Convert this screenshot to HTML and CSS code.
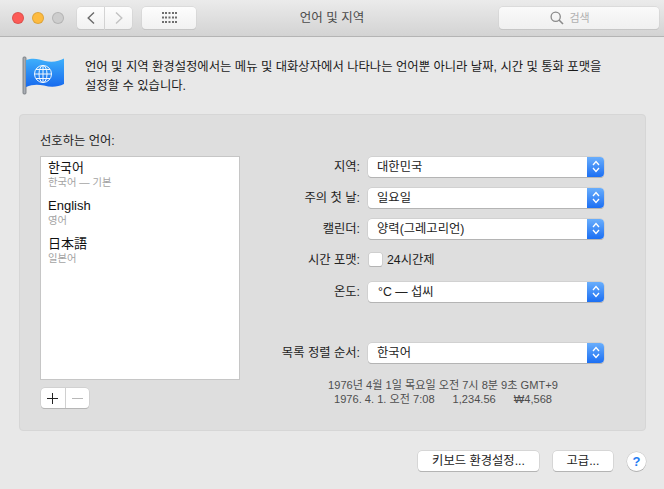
FILE: index.html
```html
<!DOCTYPE html>
<html lang="ko">
<head>
<meta charset="utf-8">
<title>언어 및 지역</title>
<link rel="stylesheet" href="styles.css">
</head>
<body>
<div class="window">
  <header class="titlebar">
    <div class="lights"><span class="light red"></span><span class="light yellow"></span><span class="light gray"></span></div>
    <div class="nav">
      <button class="tb tb-back"><svg width="8" height="12" viewBox="0 0 8 12"><path d="M7 .5 L1.200 6 L7 11.500" fill="none" stroke="#6a6a6a" stroke-width="1.400"/></svg></button>
      <button class="tb tb-fwd"><svg width="8" height="12" viewBox="0 0 8 12"><path d="M1 .5 L6.800 6 L1 11.500" fill="none" stroke="#c2c2c2" stroke-width="1.400"/></svg></button>
    </div>
    <button class="tb tb-grid"><svg width="15" height="11" viewBox="0 0 15 11" fill="#6e6e6e"><rect x="0" y="0" width="2" height="2"/><rect x="3" y="0" width="2" height="2"/><rect x="6.500" y="0" width="2" height="2"/><rect x="10" y="0" width="2" height="2"/><rect x="13" y="0" width="2" height="2"/><rect x="0" y="4.500" width="2" height="2"/><rect x="3" y="4.500" width="2" height="2"/><rect x="6.500" y="4.500" width="2" height="2"/><rect x="10" y="4.500" width="2" height="2"/><rect x="13" y="4.500" width="2" height="2"/><rect x="0" y="9" width="2" height="2"/><rect x="3" y="9" width="2" height="2"/><rect x="6.500" y="9" width="2" height="2"/><rect x="10" y="9" width="2" height="2"/><rect x="13" y="9" width="2" height="2"/></svg></button>
    <div class="title">언어 및 지역</div>
    <div class="search"><svg width="14" height="14" viewBox="0 0 14 14"><circle cx="5.700" cy="5.700" r="4.600" fill="none" stroke="#8a8a8a" stroke-width="1.300"/><path d="M9 9 L13 13" stroke="#8a8a8a" stroke-width="1.600"/></svg><span>검색</span></div>
  </header>

  <section class="intro">
    <svg class="flag" width="44" height="40" viewBox="0 0 44 40">
      <defs><linearGradient id="fl" x1="0" y1="0" x2="0" y2="1"><stop offset="0" stop-color="#3fb0fb"/><stop offset="1" stop-color="#1769ee"/></linearGradient></defs>
      <rect x="1" y="1" width="3" height="37" rx="1" fill="#a9adb3" stroke="#6f7378" stroke-width=".8"/>
      <path d="M4 4 C11 1.500 17 3 23 5 C30 6.500 37 5.500 42 2.500 L42 28 C36 31 29 31.500 22 29.500 C15 28 10 28.500 4 31 Z" fill="url(#fl)"/>
      <g fill="none" stroke="#fff" stroke-width="1" opacity=".95">
        <circle cx="21" cy="18" r="8.500"/><ellipse cx="21" cy="18" rx="4" ry="8.500"/><path d="M21 9.500 V26.500 M12.500 18 H29.500 M14 13.500 H28 M14 22.500 H28"/>
      </g>
    </svg>
    <p class="intro-text">언어 및 지역 환경설정에서는 메뉴 및 대화상자에서 나타나는 언어뿐 아니라 날짜, 시간 및 통화 포맷을<br>설정할 수 있습니다.</p>
  </section>

  <main class="panel">
    <div class="lang-col">
      <div class="lang-title">선호하는 언어:</div>
      <ul class="lang-list">
        <li><div class="lang-name">한국어</div><div class="lang-sub">한국어 — 기본</div></li>
        <li><div class="lang-name">English</div><div class="lang-sub">영어</div></li>
        <li><div class="lang-name">日本語</div><div class="lang-sub">일본어</div></li>
      </ul>
      <div class="addremove"><span class="ar plus"><svg width="13" height="13" viewBox="0 0 13 13"><path d="M6.500 1 V12 M1 6.500 H12" stroke="#222" stroke-width="1"/></svg></span><span class="ar minus"><svg width="13" height="13" viewBox="0 0 13 13"><path d="M1 6.500 H12" stroke="#b8b8b8" stroke-width="1"/></svg></span></div>
    </div>
    <div class="form-col">
      <div class="row r1"><label>지역:</label><div class="select"><span>대한민국</span><i class="stepper"><svg width="8" height="13" viewBox="0 0 8 13"><path d="M1 5 L4 1.500 L7 5 M1 8 L4 11.500 L7 8" fill="none" stroke="#fff" stroke-width="1.300"/></svg></i></div></div>
      <div class="row r2"><label>주의 첫 날:</label><div class="select"><span>일요일</span><i class="stepper"><svg width="8" height="13" viewBox="0 0 8 13"><path d="M1 5 L4 1.500 L7 5 M1 8 L4 11.500 L7 8" fill="none" stroke="#fff" stroke-width="1.300"/></svg></i></div></div>
      <div class="row r3"><label>캘린더:</label><div class="select"><span>양력(그레고리언)</span><i class="stepper"><svg width="8" height="13" viewBox="0 0 8 13"><path d="M1 5 L4 1.500 L7 5 M1 8 L4 11.500 L7 8" fill="none" stroke="#fff" stroke-width="1.300"/></svg></i></div></div>
      <div class="row r4"><label>시간 포맷:</label><div class="check"><i class="box"></i><span>24시간제</span></div></div>
      <div class="row r5"><label>온도:</label><div class="select"><span class="deg">°C — 섭씨</span><i class="stepper"><svg width="8" height="13" viewBox="0 0 8 13"><path d="M1 5 L4 1.500 L7 5 M1 8 L4 11.500 L7 8" fill="none" stroke="#fff" stroke-width="1.300"/></svg></i></div></div>
      <div class="row r6"><label>목록 정렬 순서:</label><div class="select"><span>한국어</span><i class="stepper"><svg width="8" height="13" viewBox="0 0 8 13"><path d="M1 5 L4 1.500 L7 5 M1 8 L4 11.500 L7 8" fill="none" stroke="#fff" stroke-width="1.300"/></svg></i></div></div>
      <div class="sample">
        <div>1976년 4월 1일 목요일 오전 7시 8분 9초 GMT+9</div>
        <div class="sample-b"><span>1976. 4. 1. 오전 7:08</span><span>1,234.56</span><span>₩4,568</span></div>
      </div>
    </div>
  </main>

  <footer class="footer">
    <button class="btn btn-kb">키보드 환경설정...</button>
    <button class="btn btn-adv">고급...</button>
    <button class="help">?</button>
  </footer>
</div>
</body>
</html>
```
FILE: styles.css
```css
* { box-sizing: border-box; }
html, body { margin: 0; padding: 0; }
body {
  width: 664px; height: 489px; overflow: hidden;
  background: #e8e8e8; color: #1c1c1c;
  font-family: "Liberation Sans", "Noto Sans CJK KR", sans-serif;
  font-size: 12.3px; line-height: 16px;
}
.window { width: 664px; height: 489px; display: flex; flex-direction: column; }

.titlebar {
  height: 37px; flex: none; display: flex; align-items: center; position: relative;
  padding: 0 5px 1px 12px;
  background: linear-gradient(#ebebeb, #d3d3d3);
  border-bottom: 1px solid #b4b4b4;
}
.lights { display: flex; gap: 8px; width: 65px; }
.light { width: 12px; height: 12px; border-radius: 50%; border: 1px solid rgba(0,0,0,.12); }
.red { background: #fc5b57; }
.yellow { background: #fdbb40; }
.gray { background: #cdcdcd; }
.nav { display: flex; gap: 1px; margin-right: 10px; }
.tb {
  height: 22px; padding: 0; display: flex; align-items: center; justify-content: center;
  background: linear-gradient(#fdfdfd, #f1f1f1);
  border: 0; border-radius: 4px;
  box-shadow: 0 0 0 .5px #cfcfcf, 0 1px 0 #bdbdbd;
}
.tb-back { width: 27px; border-radius: 4px 0 0 4px; }
.tb-fwd { width: 27px; border-radius: 0 4px 4px 0; }
.tb-grid { width: 54px; }
.title {
  position: absolute; left: 0; right: 0; top: 10px; text-align: center;
  color: #4b4b4b; font-size: 12.5px;
}
.search {
  margin-left: auto; width: 160px; height: 22px; display: flex; align-items: center; justify-content: center; gap: 5px;
  padding-right: 18px;
  background: linear-gradient(#fafafa, #f0f0f0); border-radius: 4px;
  box-shadow: 0 0 0 .5px #cfcfcf, 0 1px 0 #bdbdbd;
  color: #b0b0b0; font-size: 11px;
}

.intro { height: 77px; flex: none; display: flex; padding: 19px 0 0 22px; }
.flag { flex: none; margin-right: 19px; }
.intro-text { margin: 2px 0 0; font-size: 12.33px; line-height: 19px; color: #1a1a1a; white-space: nowrap; }

.panel {
  margin-left: 19px; width: 627px; height: 317px; flex: none; display: flex;
  background: #dedede; border: 1px solid #d6d6d6; border-radius: 4px;
  padding: 16px 0 0 20px;
}
.lang-col { width: 200px; flex: none; }
.lang-title { height: 25px; line-height: 20px; }
.lang-list { list-style: none; margin: 0; padding: 2px 0 0 7px; width: 200px; height: 224px; background: #fff; border: 1px solid #c6c6c6; }
.lang-list li { height: 38px; }
.lang-name { font-size: 13px; line-height: 18px; color: #111; }
.lang-sub { font-size: 10.300px; line-height: 12px; color: #a3a3a3; }
.addremove {
  margin: 8px 0 0 1px; width: 48px; height: 20px; display: flex;
  background: #fff; border-radius: 4px; box-shadow: 0 0 0 .5px #c4c4c4, 0 1px 0 #a9a9a9;
}
.ar { flex: 1; display: flex; align-items: center; justify-content: center; }
.plus { border-right: 1px solid #d0d0d0; }

.form-col { flex: 1; padding-top: 25px; }
.row { display: flex; align-items: center; height: 21px; }
.row label { width: 120px; margin-right: 8px; text-align: right; flex: none; white-space: nowrap; color: #222; }
.r2, .r3, .r4 { margin-top: 10px; }
.r5 { margin-top: 11px; }
.r6 { margin-top: 40px; }
.select {
  width: 236px; height: 20px; display: flex; align-items: center; justify-content: space-between;
  background: #fff; border-radius: 4px; padding-left: 9px; overflow: hidden;
  box-shadow: 0 0 0 .5px #c4c4c4, 0 1px 0 #a5a5a5;
  color: #222;
}
.deg { padding-left: 1px; }
.stepper {
  width: 17px; height: 20px; display: flex; align-items: center; justify-content: center;
  background: linear-gradient(#69aefc, #1c6ff3);
}
.check { display: flex; align-items: center; gap: 5px; }
.box { width: 13px; height: 13px; margin-left: 1px; background: #fff; border-radius: 2px; box-shadow: 0 0 0 .5px #c0c0c0, 0 1px 0 #a8a8a8; }
.sample { width: 406px; margin-top: 15px; text-align: center; color: #4e4e4e; font-size: 11.100px; line-height: 14px; white-space: nowrap; }
.sample-b { display: flex; justify-content: center; gap: 18px; }

.footer { flex: 1; display: flex; align-items: flex-start; padding: 20px 0 0 418px; }
.btn {
  height: 20px; padding: 0; background: #fff; border: 0; border-radius: 4px;
  box-shadow: 0 0 0 .5px #c4c4c4, 0 1px 0 #a5a5a5;
  font: 12.3px/16px "Liberation Sans", "Noto Sans CJK KR", sans-serif; color: #222;
}
.btn-kb { width: 121px; margin-right: 14px; }
.btn-adv { width: 60px; margin-right: 14px; }
.help {
  width: 19px; height: 19px; margin-top: 1px; padding: 0; border: 0; border-radius: 50%;
  background: #fff; box-shadow: 0 0 0 .5px #c4c4c4, 0 1px 0 #a5a5a5;
  color: #1f7cf2; font: bold 13px/19px "Liberation Sans", sans-serif;
}
```
